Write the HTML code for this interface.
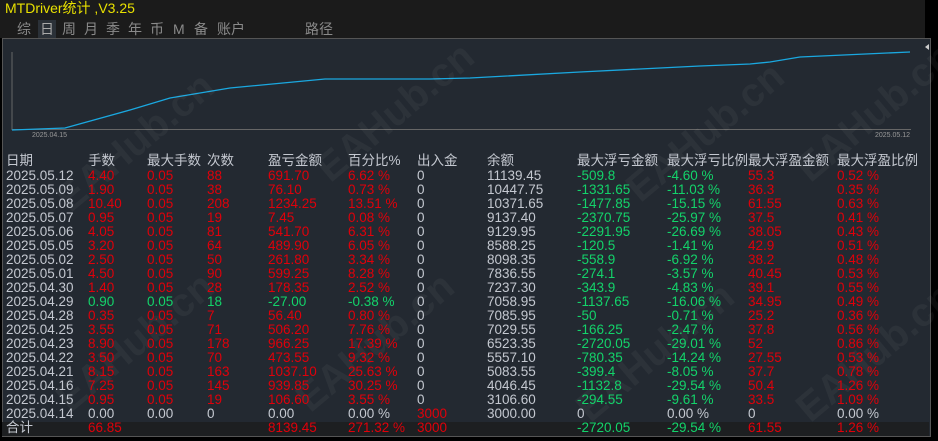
<!DOCTYPE html>
<html><head><style>
body{margin:0;width:938px;height:441px;background:#000;overflow:hidden;position:relative;font-family:"Liberation Sans","Noto Sans CJK SC",sans-serif}
#top{position:absolute;left:0;top:0;width:925px;height:38px;background:#1b1b1b}
#title{position:absolute;left:5px;top:0;color:#e8e000;font-size:14px;line-height:16px}
.tb{position:absolute;top:20px;color:#8a8a8a;font-size:14px;line-height:18px}
.tb.sel{background:#2b3138;color:#aaa;padding:0 2px;margin-left:-2px}
#panel{position:absolute;left:2px;top:38px;width:927px;height:397px;background:#232931;border:1px solid #555}
.r{position:absolute;left:0;height:14px;font-size:13.5px;line-height:14px;color:#c4c8d0;white-space:nowrap}
.r span{position:absolute;top:0}
.r span.red{color:#e0000a}.r span.grn{color:#13d36a}
#tot{position:absolute;left:2px;top:422px;width:927px;height:14px;background:#1d1f21}
.wm{position:absolute;color:rgba(255,255,255,0.045);font-size:40px;font-weight:bold;transform:rotate(-40deg)}
</style></head><body>
<div id="top"><div id="title">MTDriver统计 ,V3.25</div>
<span class="tb" style="left:17px">综</span><span class="tb sel" style="left:40px">日</span><span class="tb" style="left:62px">周</span><span class="tb" style="left:84px">月</span><span class="tb" style="left:106px">季</span><span class="tb" style="left:128px">年</span><span class="tb" style="left:150px">币</span><span class="tb" style="left:173px">M</span><span class="tb" style="left:194px">备</span><span class="tb" style="left:217px">账户</span><span class="tb" style="left:305px">路径</span></div>
<div id="panel"></div>
<div id="tot"></div>
<svg style="position:absolute;left:0;top:0" width="938" height="441">
<line x1="12" y1="52" x2="12" y2="130" stroke="#666"/>
<line x1="12" y1="129.5" x2="911" y2="129.5" stroke="#666"/>
<polyline fill="none" stroke="#1aa8e0" stroke-width="1.3" points="12,130 65,128 130,110 170,98 230,88 325,79 430,79 470,78 580,72 700,66 750,64 770,62 800,57 910,52"/>
<text x="32" y="137" font-size="7" fill="#999" font-family="Liberation Sans">2025.04.15</text>
<text x="875" y="137" font-size="7" fill="#999" font-family="Liberation Sans">2025.05.12</text>
<polygon points="925,47 929,44 929,50" fill="#ccc"/>
</svg>
<div class="wm" style="left:40px;top:120px">EAHub.cn</div>
<div class="wm" style="left:300px;top:90px">EAHub.cn</div>
<div class="wm" style="left:610px;top:110px">EAHub.cn</div>
<div class="wm" style="left:780px;top:90px">EAHub.cn</div>
<div class="wm" style="left:40px;top:320px">EAHub.cn</div>
<div class="wm" style="left:280px;top:320px">EAHub.cn</div>
<div class="wm" style="left:560px;top:330px">EAHub.cn</div>
<div class="wm" style="left:780px;top:330px">EAHub.cn</div>
<div id="rows"></div>
<script>
var c=[6,88,147,207,268,348,417,487,577,667,748,837];
var h=["日期","手数","最大手数","次数","盈亏金额","百分比%","出入金","余额","最大浮亏金额","最大浮亏比例","最大浮盈金额","最大浮盈比例"];
var d=[
["2025.05.12","4.40","0.05","88","691.70","6.62 %","0","11139.45","-509.8","-4.60 %","55.3","0.52 %"],
["2025.05.09","1.90","0.05","38","76.10","0.73 %","0","10447.75","-1331.65","-11.03 %","36.3","0.35 %"],
["2025.05.08","10.40","0.05","208","1234.25","13.51 %","0","10371.65","-1477.85","-15.15 %","61.55","0.63 %"],
["2025.05.07","0.95","0.05","19","7.45","0.08 %","0","9137.40","-2370.75","-25.97 %","37.5","0.41 %"],
["2025.05.06","4.05","0.05","81","541.70","6.31 %","0","9129.95","-2291.95","-26.69 %","38.05","0.43 %"],
["2025.05.05","3.20","0.05","64","489.90","6.05 %","0","8588.25","-120.5","-1.41 %","42.9","0.51 %"],
["2025.05.02","2.50","0.05","50","261.80","3.34 %","0","8098.35","-558.9","-6.92 %","38.2","0.48 %"],
["2025.05.01","4.50","0.05","90","599.25","8.28 %","0","7836.55","-274.1","-3.57 %","40.45","0.53 %"],
["2025.04.30","1.40","0.05","28","178.35","2.52 %","0","7237.30","-343.9","-4.83 %","39.1","0.55 %"],
["2025.04.29","0.90","0.05","18","-27.00","-0.38 %","0","7058.95","-1137.65","-16.06 %","34.95","0.49 %"],
["2025.04.28","0.35","0.05","7","56.40","0.80 %","0","7085.95","-50","-0.71 %","25.2","0.36 %"],
["2025.04.25","3.55","0.05","71","506.20","7.76 %","0","7029.55","-166.25","-2.47 %","37.8","0.56 %"],
["2025.04.23","8.90","0.05","178","966.25","17.39 %","0","6523.35","-2720.05","-29.01 %","52","0.86 %"],
["2025.04.22","3.50","0.05","70","473.55","9.32 %","0","5557.10","-780.35","-14.24 %","27.55","0.53 %"],
["2025.04.21","8.15","0.05","163","1037.10","25.63 %","0","5083.55","-399.4","-8.05 %","37.7","0.78 %"],
["2025.04.16","7.25","0.05","145","939.85","30.25 %","0","4046.45","-1132.8","-29.54 %","50.4","1.26 %"],
["2025.04.15","0.95","0.05","19","106.60","3.55 %","0","3106.60","-294.55","-9.61 %","33.5","1.09 %"],
["2025.04.14","0.00","0.00","0","0.00","0.00 %","3000","3000.00","0","0.00 %","0","0.00 %"],
["合计","66.85","","","8139.45","271.32 %","3000","","-2720.05","-29.54 %","61.55","1.26 %"]];
var o='<div class="r" style="top:154px">';h.forEach(function(t,i){o+='<span style="left:'+c[i]+'px">'+t+'</span>'});o+='</div>';
d.forEach(function(r,k){var y=169+k*14;var g=r[4].charAt(0)=='-';var z=r[1]=='0.00';
o+='<div class="r" style="top:'+y+'px">';r.forEach(function(t,i){var cl='';
if(i>=1&&i<=5)cl=z?'':(g?'grn':'red');if(i==6&&t=='3000')cl='red';if(i==8||i==9)cl=(t=='0'||t=='0.00 %')?'':'grn';if(i>=10)cl=(t=='0'||t=='0.00 %')?'':'red';
o+='<span class="'+cl+'" style="left:'+c[i]+'px">'+t+'</span>'});o+='</div>'});
document.getElementById('rows').innerHTML=o;
</script>
</body></html>
